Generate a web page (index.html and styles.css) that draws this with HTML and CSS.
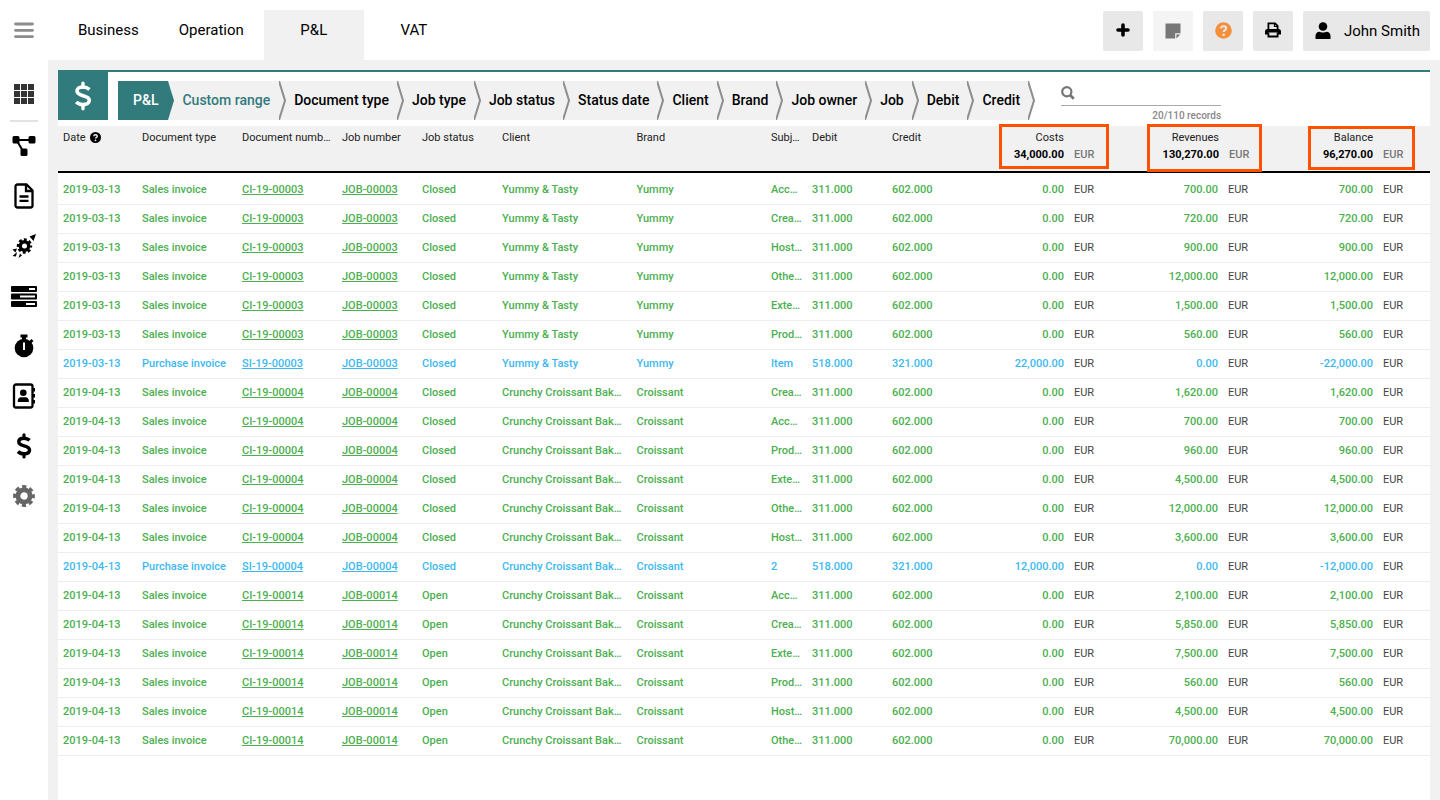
FILE: index.html
```html
<!DOCTYPE html>
<html lang="en">
<head>
    <meta charset="UTF-8">
    <meta name="viewport" content="width=device-width, initial-scale=1.0">
    <title>P&amp;L</title>
    <link rel="stylesheet" href="styles.css">
</head>
<body>
    <aside class="sidebar">
        <button class="menu-btn" aria-label="Menu">
            <svg width="20" height="18" viewBox="0 0 20 18"><path d="M1.500 3h17M1.500 9.300h17M1.500 15.600h17" stroke="#8c8c8c" stroke-width="2.800" stroke-linecap="round"/></svg>
        </button>
        <nav class="side-nav" aria-label="Modules">
            <a href="#" class="side-link side-apps" aria-label="Dashboard">
                <svg width="20" height="20" viewBox="0 0 20 20" fill="#333"><path d="M0 0h6v6H0zM7 0h6v6H7zM14 0h6v6h-6zM0 7h6v6H0zM7 7h6v6H7zM14 7h6v6h-6zM0 14h6v6H0zM7 14h6v6H7zM14 14h6v6h-6z"/></svg>
            </a>
            <a href="#" class="side-link" aria-label="Projects">
                <svg width="24" height="22" viewBox="0 0 24 22"><path d="M4 5h16M4.500 5l7 12" stroke="#000" stroke-width="2"/><rect x="0.500" y="1" width="7" height="7.500" rx="1.500"/><rect x="16.500" y="1" width="7" height="7.500" rx="1.500"/><rect x="8.500" y="13.500" width="7" height="7.500" rx="1.500"/></svg>
            </a>
            <a href="#" class="side-link" aria-label="Documents">
                <svg width="20" height="26" viewBox="0 0 20 26" fill="none" stroke="#000" stroke-width="2.300"><path d="M3.500 1.500h9l6 6V22.500a2 2 0 0 1-2 2h-13a2 2 0 0 1-2-2V3.500a2 2 0 0 1 2-2z"/><path d="M12 2v6h6M5.500 13.500h9M5.500 17.800h9"/></svg>
            </a>
            <a href="#" class="side-link" aria-label="Campaigns">
                <svg width="24" height="24" viewBox="0 0 24 24"><path d="M24 0l-2.500 7-4-4.500zM0.500 15.500l4.500-1-1.500 4zM0.500 22l4.500-4-1 4.500zM6.500 24l1.500-4.500 2 2z"/><circle cx="12.500" cy="12" r="4.200" fill="none" stroke="#000" stroke-width="3.400"/><circle cx="12.500" cy="12" r="6.300" fill="none" stroke="#000" stroke-width="2.800" stroke-dasharray="2.800 2.148" stroke-dashoffset="1.400"/></svg>
            </a>
            <a href="#" class="side-link" aria-label="Tasks">
                <svg width="26" height="21" viewBox="0 0 26 21"><rect width="26" height="6" rx="1"/><rect y="7.500" width="26" height="6" rx="1"/><rect y="15" width="26" height="6" rx="1"/><path d="M18 2h6v2h-6zM9 9.500h15v2H9zM15 17h9v2h-9z" fill="#fff"/></svg>
            </a>
            <a href="#" class="side-link" aria-label="Timesheets">
                <svg width="20" height="24" viewBox="0 0 20 24"><path d="M6.500 0.500h7v3H12V5.500H8v-2H6.500z"/><path d="M15 7.500l2.500-2.500 2 2-2.500 2.500z"/><circle cx="10" cy="14" r="9.300"/><path d="M9 8.500h2v7.500H9z" fill="#fff"/></svg>
            </a>
            <a href="#" class="side-link" aria-label="Contacts">
                <svg width="24" height="26" viewBox="0 0 24 26"><rect x="2" y="1.500" width="18.500" height="23" rx="2" fill="none" stroke="#000" stroke-width="2.300"/><path d="M20 5h3v3.500h-3zM20 11h3v3.500h-3zM20 17h3v3.500h-3z"/><circle cx="11.300" cy="9.800" r="3.300"/><path d="M5.800 19v-1.500c0-2 1.500-3.300 3-3.300h5c1.500 0 3 1.300 3 3.300V19z"/></svg>
            </a>
            <a href="#" class="side-link" aria-label="Finance">
                <svg width="16" height="26" viewBox="0 0 16 26" fill="none" stroke="#000"><path d="M13.600 7.300C12 5.800 10.300 5.200 8 5.200c-3.200 0-5.200 1.300-5.200 3.500 0 5.500 10.700 2.900 10.700 8.300 0 2.400-2.300 3.800-5.500 3.800-2.600 0-4.500-.7-6-2.300" stroke-width="3.500"/><path d="M8 1.800v3M8 21v3" stroke-width="3.200" stroke-linecap="round"/></svg>
            </a>
            <a href="#" class="side-link" aria-label="Settings">
                <svg width="22" height="22" viewBox="0 0 22 22" fill="none" stroke="#666"><circle cx="11" cy="11" r="6.100" stroke-width="4.800"/><circle cx="11" cy="11" r="9.200" stroke-width="3.400" stroke-dasharray="4.200 3.025" stroke-dashoffset="2.100"/></svg>
            </a>
        </nav>
    </aside>

    <div class="page">
        <header class="topbar">
            <nav class="tabs" aria-label="Sections">
                <a href="#" class="tab">Business</a>
                <a href="#" class="tab">Operation</a>
                <a href="#" class="tab active">P&amp;L</a>
                <a href="#" class="tab">VAT</a>
            </nav>
            <div class="actions">
                <button class="action-btn" aria-label="Add">
                    <svg width="14" height="16" viewBox="0 0 14 16"><path d="M7 2v10M2 7h10" stroke="#000" stroke-width="3.600" stroke-linecap="round"/></svg>
                </button>
                <button class="action-btn muted" aria-label="Notes">
                    <svg width="16" height="16" viewBox="0 0 16 16" fill="#777"><path d="M.5.500h15v9.700h-5.300v5.300H.5z"/><path d="M11.400 11.400h4l-4 4z"/></svg>
                </button>
                <button class="action-btn" aria-label="Help">
                    <svg width="17" height="18" viewBox="0 0 17 18"><circle cx="8.500" cy="8.500" r="8.300" fill="#f68f3a"/><path d="M5.800 6.400c.3-1.400 1.300-2.200 2.700-2.200 1.500 0 2.700.9 2.700 2.200 0 1.700-2.500 1.700-2.500 3.600" fill="none" stroke="#e8e8e8" stroke-width="2"/><circle cx="8.600" cy="12.700" r="1.300" fill="#e8e8e8"/></svg>
                </button>
                <button class="action-btn" aria-label="Print">
                    <svg width="16" height="18" viewBox="0 0 16 18" fill="none" stroke="#000" stroke-width="1.800"><path d="M3.400 8V1.400h6.700l2.500 2.500V8"/><path d="M9.500 1.500v3h3" stroke-width="1.200"/><path d="M0 12.500V9.500a2.500 2.500 0 0 1 2.500-2.500h11A2.500 2.500 0 0 1 16 9.500v3h-3v-2H3v2z" fill="#000" stroke="none"/><path d="M3.400 10.500v4h9.200v-4"/></svg>
                </button>
                <button class="action-btn user-btn">
                    <svg width="16" height="18" viewBox="0 0 16 18"><circle cx="8" cy="4.500" r="4.300"/><path d="M.5 17v-3c0-2.600 1.600-4.300 4-4.300 1.200.9 5.800.9 7 0 2.400 0 4 1.700 4 4.300v3z"/></svg>
                    John Smith
                </button>
            </div>
        </header>

        <main class="panel">
            <div class="toolbar">
                <div class="module-icon">
                    <svg width="18" height="30" viewBox="0 0 18 30" fill="none" stroke="#fff"><path d="M15.500 8.300C13.500 6.700 11.500 6 9 6 5.500 6 3 7.600 3 10.100c0 6 12.300 3.200 12.300 9.200 0 2.700-2.700 4.300-6.300 4.300-2.900 0-5-.8-6.800-2.600" stroke-width="3.600"/><path d="M9 2.300v4M9 23.700v4" stroke-width="3.400" stroke-linecap="round"/></svg>
                </div>
                <nav class="filters" aria-label="Filters" id="filters"></nav>
                <div class="search">
                    <label class="search-box">
                        <svg width="14" height="14" viewBox="0 0 14 14" fill="none" stroke="#777" stroke-width="2.200"><circle cx="5.800" cy="5.800" r="4.600"/><path d="M9.200 9.200l3.600 3.600" stroke-width="2.800"/></svg>
                        <input type="text" class="search-input" aria-label="Search records">
                    </label>
                    <div class="records">20/110 records</div>
                </div>
            </div>

            <table class="ledger">
                <colgroup>
                    <col class="col-date">
                    <col class="col-type">
                    <col class="col-number">
                    <col class="col-job">
                    <col class="col-status">
                    <col class="col-client">
                    <col class="col-brand">
                    <col class="col-subject">
                    <col class="col-debit">
                    <col class="col-credit">
                    <col class="col-amount"><col class="col-currency">
                    <col class="col-amount"><col class="col-currency wide">
                    <col class="col-amount"><col class="col-currency">
                </colgroup>
                <thead>
                    <tr>
                        <th>Date
                            <svg class="hint" width="11" height="11" viewBox="0 0 11 11"><circle cx="5.500" cy="5.500" r="5.500"/><path d="M3.700 4.300c.1-1 .8-1.500 1.800-1.500s1.800.5 1.800 1.400c0 1.200-1.700 1.100-1.700 2.300" fill="none" stroke="#f1f1f1" stroke-width="1.400"/><circle cx="5.500" cy="8.300" r=".9" fill="#f1f1f1"/></svg>
                        </th>
                        <th>Document type</th>
                        <th>Document numb…</th>
                        <th>Job number</th>
                        <th>Job status</th>
                        <th>Client</th>
                        <th>Brand</th>
                        <th class="subject">Subj…</th>
                        <th>Debit</th>
                        <th>Credit</th>
                        <th class="total" colspan="2">
                            <div class="total-name">Costs</div>
                            <div class="total-row"><b class="total-sum">34,000.00</b><span class="total-currency">EUR</span></div>
                            <span class="frame frame-costs"></span>
                        </th>
                        <th class="total" colspan="2">
                            <div class="total-name">Revenues</div>
                            <div class="total-row"><b class="total-sum">130,270.00</b><span class="total-currency">EUR</span></div>
                            <span class="frame frame-revenues"></span>
                        </th>
                        <th class="total" colspan="2">
                            <div class="total-name">Balance</div>
                            <div class="total-row"><b class="total-sum">96,270.00</b><span class="total-currency">EUR</span></div>
                            <span class="frame frame-balance"></span>
                        </th>
                    </tr>
                </thead>
                <tbody id="rows"></tbody>
            </table>
        </main>
    </div>

    <script src="script.js"></script>
</body>
</html>
```
FILE: styles.css
```css
:root {
    --teal: #317b7d;
    --grey: #f1f1f1;
    --button: #e8e8e8;
    --sale: #4caf50;
    --purchase: #3db8ef;
    --muted: #777;
    --highlight: #ff5200;
}

* {
    box-sizing: border-box;
}

body {
    margin: 0;
    display: flex;
    min-height: 100vh;
    background: white;
    font-family: Roboto, sans-serif;
    font-weight: 500;
    color: #000;
}

a {
    color: inherit;
}

button {
    font: inherit;
    color: inherit;
    border: none;
    padding: 0;
    cursor: pointer;
}

svg {
    display: block;
    flex: none;
}

/* Sidebar */
.sidebar {
    flex: none;
    width: 48px;
}

.menu-btn {
    display: flex;
    align-items: center;
    justify-content: center;
    width: 100%;
    height: 60px;
    background: none;
}

.side-nav {
    display: flex;
    flex-direction: column;
    padding-top: 10px;
}

.side-link {
    display: flex;
    align-items: center;
    justify-content: center;
    height: 50px;
    padding-bottom: 2px;
}

.side-apps {
    margin: 0 10px;
    border-bottom: 2px solid #e2e2e2;
    height: 52px;
}

/* Top bar */
.page {
    flex: 1;
    min-width: 0;
    display: flex;
    flex-direction: column;
    background: var(--grey);
}

.topbar {
    display: flex;
    justify-content: space-between;
    height: 60px;
    padding: 10px 10px 0;
    background: white;
    font-size: 15px;
    font-weight: 400;
}

.tabs {
    display: flex;
}

.tab {
    min-width: 100px;
    padding: 0 20px;
    line-height: 40px;
    text-align: center;
    text-decoration: none;
}

.tab.active {
    background: var(--grey);
}

.actions {
    display: flex;
    gap: 10px;
    padding-top: 1px;
}

.action-btn {
    display: flex;
    align-items: center;
    justify-content: center;
    width: 40px;
    height: 40px;
    border-radius: 2px;
    background: var(--button);
}

.action-btn.muted {
    background: #f4f4f4;
}

.user-btn {
    width: auto;
    padding: 0 10px 0 12px;
    gap: 13px;
}

/* Panel */
.panel {
    flex: 1;
    margin: 10px 10px 0;
    background: white;
}

.toolbar {
    display: flex;
    gap: 10px;
    height: 56px;
    border-top: 2px solid var(--teal);
}

.module-icon {
    display: flex;
    align-items: center;
    justify-content: center;
    width: 50px;
    height: 48px;
    background: var(--teal);
}

.filters {
    display: flex;
    height: 39px;
    margin-top: 9px;
    font-size: 14px;
    line-height: 39px;
    white-space: nowrap;
}

.filter {
    display: flex;
    gap: 8px;
    padding-left: 15px;
    background: linear-gradient(var(--grey), var(--grey)) no-repeat 0 0 / calc(100% - 7px) 100%;
    text-decoration: none;
}

.filter + .filter {
    margin-left: -7px;
}

/* the arrow lies over the start of the next filter */
.filter-arrow {
    position: relative;
    z-index: 1;
    fill: var(--grey);
    stroke: #8e8e8e;
    stroke-width: 2;
}

.filter.root {
    gap: 10px;
    background-image: linear-gradient(var(--teal), var(--teal));
    color: white;
}

.filter.root .filter-arrow {
    fill: var(--teal);
    stroke: none;
}

.filter.selected {
    gap: 9px;
    padding-left: 14px;
    color: var(--teal);
}

.search {
    width: 160px;
    margin: 9px 0 0 16px;
}

.search-box {
    display: flex;
    align-items: center;
    height: 25px;
    border-bottom: 1px solid #aaa;
}

.search-input {
    flex: 1;
    min-width: 0;
    border: none;
    outline: none;
    background: none;
    font: inherit;
    font-size: 14px;
}

.records {
    padding-top: 3px;
    text-align: right;
    font-size: 10px;
    line-height: 14px;
    color: #888;
}

/* Table */
.ledger {
    width: 100%;
    table-layout: fixed;
    border-collapse: separate;
    border-spacing: 0;
    font-size: 11px;
    line-height: 16px;
}

.col-date {
    width: 79px;
}

.col-type,
.col-number {
    width: 100px;
}

.col-job,
.col-status,
.col-debit,
.col-credit {
    width: 80px;
}

.col-subject {
    width: 41px;
}

.col-amount {
    width: 102px;
}

.col-currency {
    width: 52px;
}

.col-currency.wide {
    width: 53px;
}

.ledger th,
.ledger td {
    padding: 0 5px;
    text-align: left;
    white-space: nowrap;
    overflow: hidden;
    text-overflow: ellipsis;
}

.ledger .subject {
    padding-right: 0;
}

.ledger th {
    height: 47px;
    padding-top: 4px;
    border-bottom: 2px solid #000;
    background: var(--grey);
    vertical-align: top;
    font-weight: 400;
    color: #222;
}

.hint {
    display: inline-block;
    margin-left: 2px;
    vertical-align: -2px;
}

.ledger th.total {
    position: relative;
    overflow: visible;
    padding-right: 57px;
    text-align: right;
}

.total-row {
    display: flex;
    justify-content: flex-end;
    gap: 10px;
    margin-right: -52px;
    padding-top: 1px;
}

.total-sum {
    font-weight: 700;
    color: #000;
}

.total-currency {
    width: 42px;
    text-align: left;
    font-weight: 500;
    color: var(--muted);
}

.frame {
    position: absolute;
    border: 3px solid var(--highlight);
    outline: 1px solid rgba(255, 82, 0, 0.4);
    outline-offset: -1px;
}

.frame-costs {
    inset: -2px 12px 2px 32px;
}

.frame-revenues {
    inset: -2px 14px -1px 26px;
}

.frame-balance {
    inset: 0 15px 1px 32px;
}

.ledger td {
    height: 29px;
    border-bottom: 1px solid #eee;
}

.ledger tbody tr:first-child td {
    height: 32px;
    padding-top: 3px;
}

.sale {
    color: var(--sale);
}

.purchase {
    color: var(--purchase);
}

.ledger td.amount {
    text-align: right;
}

.ledger td.currency {
    font-weight: 400;
    color: #444;
}
```
FILE: script.js
```js
const filters = ['P&L', 'Custom range', 'Document type', 'Job type', 'Job status', 'Status date',
    'Client', 'Brand', 'Job owner', 'Job', 'Debit', 'Credit'];

// date, job, status, client, brand, subject, costs, revenues
const yummy = ['2019-03-13', '00003', 'Closed', 'Yummy & Tasty', 'Yummy'];
const croissant = ['2019-04-13', '00004', 'Closed', 'Crunchy Croissant Bak…', 'Croissant'];
const croissantOpen = ['2019-04-13', '00014', 'Open', 'Crunchy Croissant Bak…', 'Croissant'];

const entries = [
    [...yummy, 'Acc…', 0, 700],
    [...yummy, 'Crea…', 0, 720],
    [...yummy, 'Host…', 0, 900],
    [...yummy, 'Othe…', 0, 12000],
    [...yummy, 'Exte…', 0, 1500],
    [...yummy, 'Prod…', 0, 560],
    [...yummy, 'Item', 22000, 0],
    [...croissant, 'Crea…', 0, 1620],
    [...croissant, 'Acc…', 0, 700],
    [...croissant, 'Prod…', 0, 960],
    [...croissant, 'Exte…', 0, 4500],
    [...croissant, 'Othe…', 0, 12000],
    [...croissant, 'Host…', 0, 3600],
    [...croissant, '2', 12000, 0],
    [...croissantOpen, 'Acc…', 0, 2100],
    [...croissantOpen, 'Crea…', 0, 5850],
    [...croissantOpen, 'Exte…', 0, 7500],
    [...croissantOpen, 'Prod…', 0, 560],
    [...croissantOpen, 'Host…', 0, 4500],
    [...croissantOpen, 'Othe…', 0, 70000]
];

function escapeHtml(text) {
    return text.replace(/&/g, '&amp;');
}

function formatAmount(num) {
    return num.toLocaleString('en-US', { minimumFractionDigits: 2 });
}

function moneyCells(num) {
    return `<td class="amount">${formatAmount(num)}</td><td class="currency">EUR</td>`;
}

// Filter bar
document.getElementById('filters').innerHTML = filters.map((name, i) => {
    const state = i === 0 ? ' root' : i === 1 ? ' selected' : '';
    const arrow = i === 0 ? 'M0 0L6 19.5L0 39z' : 'M0 0L6 19.5L0 39';
    return `<a href="#" class="filter${state}">${escapeHtml(name)}
        <svg class="filter-arrow" width="7" height="39" viewBox="0 0 7 39"><path d="${arrow}"/></svg></a>`;
}).join('');

// Table rows
document.getElementById('rows').innerHTML = entries.map(entry => {
    const [date, job, status, client, brand, subject, costs, revenues] = entry;
    const purchase = costs > 0;
    return `<tr class="${purchase ? 'purchase' : 'sale'}">
        <td>${date}</td>
        <td>${purchase ? 'Purchase invoice' : 'Sales invoice'}</td>
        <td><a href="#">${purchase ? 'SI' : 'CI'}-19-${job}</a></td>
        <td><a href="#">JOB-${job}</a></td>
        <td>${status}</td>
        <td>${escapeHtml(client)}</td>
        <td>${brand}</td>
        <td class="subject">${subject}</td>
        <td>${purchase ? '518.000' : '311.000'}</td>
        <td>${purchase ? '321.000' : '602.000'}</td>
        ${moneyCells(costs)}${moneyCells(revenues)}${moneyCells(revenues - costs)}
    </tr>`;
}).join('');
```
